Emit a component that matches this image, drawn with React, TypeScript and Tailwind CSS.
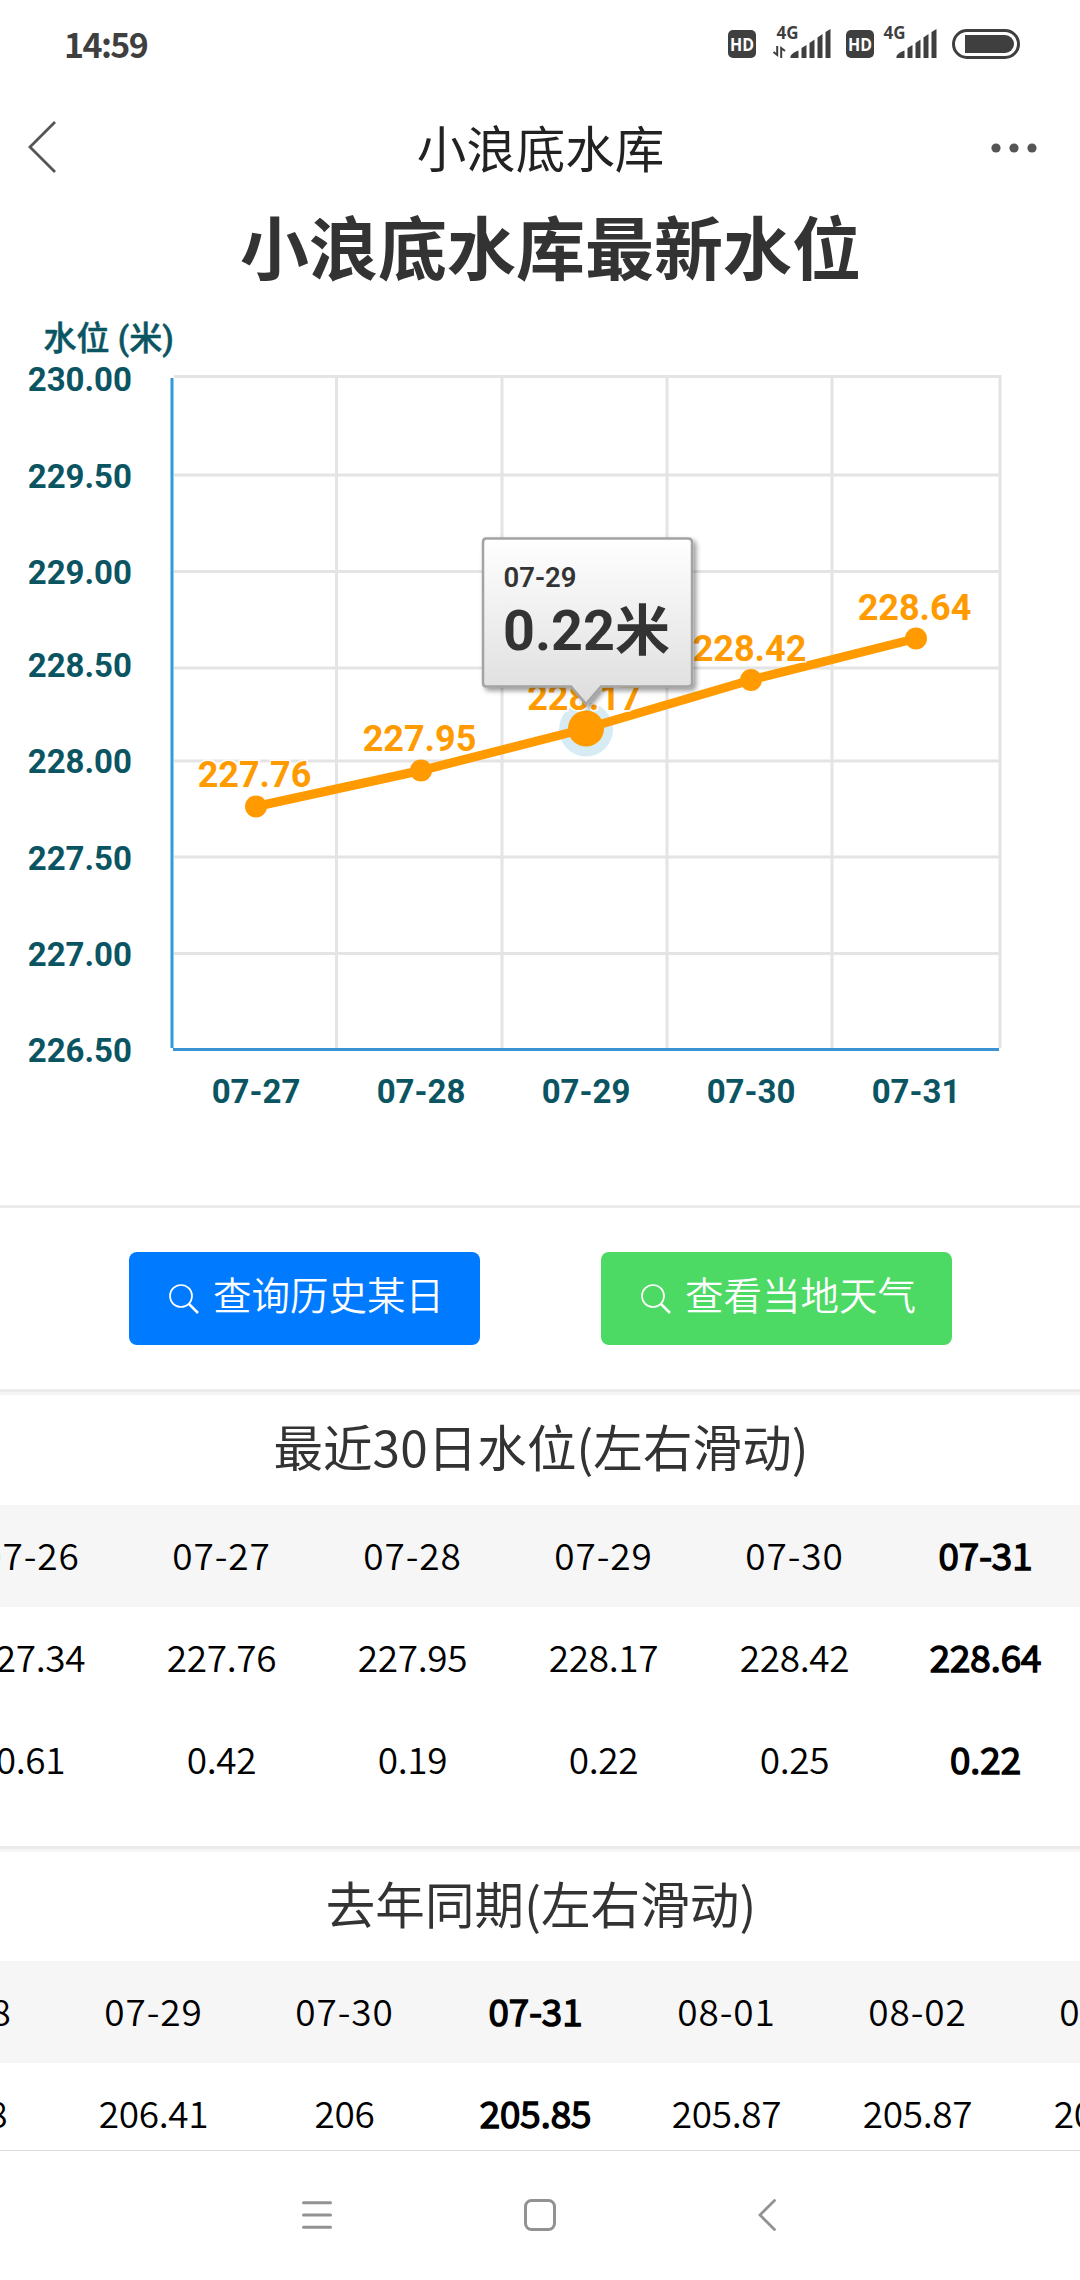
const yTicks = [
  { label: '230.00', line: 376.5, base: 391 },
  { label: '229.50', line: 475, base: 488 },
  { label: '229.00', line: 571.5, base: 584 },
  { label: '228.50', line: 668, base: 677 },
  { label: '228.00', line: 761, base: 773 },
  { label: '227.50', line: 857, base: 870 },
  { label: '227.00', line: 953.5, base: 966 },
  { label: '226.50', line: null, base: 1062 },
];

const points = [
  { date: '07-27', value: '227.76', x: 256, y: 806.5, labelX: 254.5, labelY: 787 },
  { date: '07-28', value: '227.95', x: 421, y: 770.5, labelX: 419.5, labelY: 751 },
  { date: '07-29', value: '228.17', x: 586, y: 728.5, labelX: 584, labelY: 710 },
  { date: '07-30', value: '228.42', x: 751, y: 680, labelX: 749.5, labelY: 661 },
  { date: '07-31', value: '228.64', x: 916, y: 638.5, labelX: 914.5, labelY: 620 },
];

const gridX = [336.5, 502, 667, 832, 1000];

const recent = [
  { date: '07-26', level: '227.34', diff: '0.61' },
  { date: '07-27', level: '227.76', diff: '0.42' },
  { date: '07-28', level: '227.95', diff: '0.19' },
  { date: '07-29', level: '228.17', diff: '0.22' },
  { date: '07-30', level: '228.42', diff: '0.25' },
  { date: '07-31', level: '228.64', diff: '0.22', today: true },
];

const lastYear = [
  { date: '07-28', level: '206.8' },
  { date: '07-29', level: '206.41' },
  { date: '07-30', level: '206' },
  { date: '07-31', level: '205.85', today: true },
  { date: '08-01', level: '205.87' },
  { date: '08-02', level: '205.87' },
  { date: '08-03', level: '205.87' },
];

function HdBadge() {
  return (
    <svg width="28" height="28" viewBox="0 0 28 28" className="overflow-visible">
      <rect width="28" height="28" rx="5" fill="#3f3f3f" />
      <text
        x="14"
        y="20.7"
        textAnchor="middle"
        textLength="24"
        lengthAdjust="spacingAndGlyphs"
        fill="#fff"
        className="font-['Open_Sans',sans-serif] text-[18px] font-bold"
      >
        HD
      </text>
    </svg>
  );
}

function Signal({ arrows = false }: { arrows?: boolean }) {
  return (
    <svg width="58" height="34" viewBox="0 0 58 34" fill="#3f3f3f" className="overflow-visible">
      <text
        x={arrows ? 3.5 : 4.5}
        y="14"
        textLength="22"
        lengthAdjust="spacingAndGlyphs"
        className="font-['Open_Sans',sans-serif] text-[17px] font-bold"
      >
        4G
      </text>
      {arrows && (
        <path d="M4.200 21V30L0.500 27M8.200 33V23L12 26" fill="none" stroke="#3f3f3f" strokeWidth="2" />
      )}
      <path d="M17.500 33V31Q20 27 25.500 25.500V33Z" />
      <path d="M28.500 23L33.500 20V33H28.500Z" />
      <path d="M36.500 18L41.500 14.500V33H36.500Z" />
      <path d="M44.500 12.500L49.500 9V33H44.500Z" />
      <path d="M52.500 7L57.500 4V33H52.500Z" />
    </svg>
  );
}

function StatusBar() {
  return (
    <div className="flex h-[90px] items-start justify-between pl-[64px] pr-[60px] text-[#3f3f3f]">
      <span className="mt-[23px] font-['Noto_Sans_CJK_SC',sans-serif] text-[34px] leading-[42px] font-bold tracking-[-1.6px]">
        14:59
      </span>
      <div className="flex pt-[25px]">
        <div className="mt-[5px]">
          <HdBadge />
        </div>
        <div className="ml-[17px]">
          <Signal arrows />
        </div>
        <div className="mt-[5px] ml-[15px]">
          <HdBadge />
        </div>
        <div className="ml-[5px]">
          <Signal />
        </div>
        <div className="mt-[4px] ml-[15px] flex h-[30px] w-[68px] items-center rounded-full border-3 border-[#3f3f3f] pl-[10px]">
          <div className="h-[18px] w-[49px] rounded-l-[3px] rounded-r-full bg-[#3f3f3f]" />
        </div>
      </div>
    </div>
  );
}

function NavHeader() {
  return (
    <header className="flex h-[114px] items-center justify-between pl-[28px] pr-[43px]">
      <svg width="28" height="52" viewBox="0 0 28 52" fill="none">
        <path d="M27 1L2 26L27 51" stroke="#555" strokeWidth="2.8" />
      </svg>
      <span className="-mt-[1px] ml-[34px] text-[49.500px] leading-[60px] text-[#222]">小浪底水库</span>
      <svg width="46" height="10" viewBox="0 0 46 10" fill="#555" className="mt-[2px]">
        <circle cx="5" cy="5" r="4.6" />
        <circle cx="23" cy="5" r="4.6" />
        <circle cx="41" cy="5" r="4.6" />
      </svg>
    </header>
  );
}

function LevelChart() {
  const active = points[2];

  return (
    <svg
      width="1080"
      height="905"
      viewBox="0 300 1080 905"
      className="block font-['Roboto','Noto_Sans_CJK_SC',sans-serif]"
    >
      <defs>
        <linearGradient id="tip" x1="0" y1="0" x2="0" y2="1">
          <stop offset="0" stopColor="#ffffff" />
          <stop offset="1" stopColor="#dddddd" />
        </linearGradient>
        <filter id="tipShadow" x="-10%" y="-10%" width="120%" height="125%">
          <feDropShadow dx="3" dy="3" stdDeviation="2.5" floodColor="#000" floodOpacity="0.4" />
        </filter>
      </defs>

      <text
        x="43.5"
        y="350"
        fill="#0b5563"
        stroke="#0b5563"
        strokeWidth="0.5"
        className="text-[33px] font-medium"
      >
        水位 (米)
      </text>

      {yTicks.map((tick) => (
        <g key={tick.label}>
          {tick.line && (
            <line x1="174" x2="1000" y1={tick.line} y2={tick.line} stroke="#e4e4e4" strokeWidth="3" />
          )}
          <text x="132" y={tick.base} textAnchor="end" fill="#0b5563" className="text-[33px] font-bold">
            {tick.label}
          </text>
        </g>
      ))}
      {gridX.map((x) => (
        <line key={x} x1={x} x2={x} y1="375" y2="1048" stroke="#e4e4e4" strokeWidth="3" />
      ))}
      <line x1="172" x2="172" y1="378" y2="1048" stroke="#2f9bd8" strokeWidth="3" />
      <line x1="173" x2="999" y1="1049.5" y2="1049.5" stroke="#3a93d6" strokeWidth="3" />

      {points.map((p) => (
        <text key={p.date} x={p.x} y="1103" textAnchor="middle" fill="#0b5563" className="text-[33px] font-bold">
          {p.date}
        </text>
      ))}

      <circle cx={active.x} cy={active.y + 1} r="27" fill="#d6ebf3" />
      <polyline
        points={points.map((p) => `${p.x},${p.y}`).join(' ')}
        fill="none"
        stroke="#ff9b00"
        strokeWidth="9"
      />
      {points.map((p) => (
        <circle key={p.date} cx={p.x} cy={p.y} r={p === active ? 18 : 11} fill="#ff9b00" />
      ))}
      {points.map((p) => (
        <text
          key={p.date}
          x={p.labelX}
          y={p.labelY}
          textAnchor="middle"
          fill="#ff9b00"
          stroke="#fff"
          strokeWidth="3"
          paintOrder="stroke"
          className="text-[36px] font-bold"
        >
          {p.value}
        </text>
      ))}

      {/* tooltip */}
      <path
        d="M486 538.500H688Q692 538.500 692 542.500V682.500Q692 686.500 688 686.500H601L586 704L571 686.500H486Q483 686.500 483 682.500V542.500Q483 538.500 486 538.500Z"
        fill="url(#tip)"
        stroke="#a3a3a3"
        strokeWidth="2.5"
        filter="url(#tipShadow)"
      />
      <text x="503.5" y="587" fill="#333" className="text-[27.500px] font-semibold">
        07-29
      </text>
      <text x="503" y="650" fill="#333" className="text-[56px] font-bold">
        <tspan textLength="112" lengthAdjust="spacingAndGlyphs">0.22</tspan>
        <tspan className="text-[55px]">米</tspan>
      </text>
    </svg>
  );
}

function SearchIcon() {
  return (
    <svg width="30" height="30" viewBox="0 0 30 30" fill="none" stroke="#fff" strokeWidth="1.7">
      <circle cx="12" cy="12" r="11" />
      <path d="M20 20L29 29" strokeWidth="2.5" />
    </svg>
  );
}

function ActionButton({ label, color }: { label: string; color: string }) {
  return (
    <button className={`flex h-[93px] w-[351px] items-center rounded-lg pl-[40px] text-white ${color}`}>
      <SearchIcon />
      <span className="mt-[-11px] ml-[14px] text-[38.500px] leading-[58px] font-[350] whitespace-nowrap">
        {label}
      </span>
    </button>
  );
}

function Cell({ text, today }: { text?: string; today?: boolean }) {
  return (
    <div
      className={`w-[191px] shrink-0 pl-[2px] text-center ${
        today ? 'tracking-normal [-webkit-text-stroke:1.6px_black]' : ''
      }`}
    >
      {text}
    </div>
  );
}

function SectionTitle({ children }: { children: string }) {
  return (
    <h2 className="flex h-[110px] items-center justify-center border-t-3 border-[#f5f5f5] pb-[4px] pl-[2px] text-[49.500px] tracking-[0.1px] text-[#333]">
      {children}
    </h2>
  );
}

export default function App() {
  return (
    <div className="flex h-[2280px] w-[1080px] flex-col overflow-hidden bg-white font-['Noto_Sans_CJK_SC',sans-serif]">
      <StatusBar />
      <NavHeader />
      <h1 className="flex h-[96px] items-center justify-center pl-[21px] pb-[15px] text-[69px] leading-[80px] font-bold text-[#333]">
        小浪底水库最新水位
      </h1>
      <LevelChart />

      <div className="flex h-[187px] items-start gap-[121px] border-y-3 border-[#ebebeb] pt-[44px] pl-[129px]">
        <ActionButton label="查询历史某日" color="bg-[#007aff]" />
        <ActionButton label="查看当地天气" color="bg-[#4cd964]" />
      </div>

      <section className="h-[457px] shrink-0 border-b-3 border-[#ebebeb]">
        <SectionTitle>最近30日水位(左右滑动)</SectionTitle>
        <div className="mt-[3px] text-[37px] leading-[99px] font-[350] tracking-[-0.3px] text-black">
          <div className="flex h-[102px] justify-end bg-[#f6f6f6] tracking-[0.9px]">
            {recent.map((d) => (
              <Cell key={d.date} text={d.date} today={d.today} />
            ))}
          </div>
          <div className="flex h-[102px] justify-end">
            {recent.map((d) => (
              <Cell key={d.date} text={d.level} today={d.today} />
            ))}
          </div>
          <div className="flex h-[102px] justify-end">
            {recent.map((d) => (
              <Cell key={d.date} text={d.diff} today={d.today} />
            ))}
          </div>
        </div>
      </section>

      <section className="h-[301px] shrink-0 overflow-hidden">
        <SectionTitle>去年同期(左右滑动)</SectionTitle>
        <div className="mt-[2px] text-[37px] leading-[99px] font-[350] tracking-[-0.3px] text-black">
          <div className="h-[102px] bg-[#f6f6f6] tracking-[0.9px]">
            <div className="-ml-[134px] flex">
              {lastYear.map((d) => (
                <Cell key={d.date} text={d.date} today={d.today} />
              ))}
            </div>
          </div>
          <div className="-ml-[134px] flex">
            {lastYear.map((d) => (
              <Cell key={d.date} text={d.level} today={d.today} />
            ))}
          </div>
        </div>
      </section>

      <nav className="flex h-[130px] items-center border-t border-[#dcdcdc] pb-[2px] pl-[302px]">
        <svg width="30" height="28" viewBox="0 0 30 28" stroke="#929292" strokeWidth="3" strokeLinecap="round">
          <path d="M1.500 1.800H28.500M1.500 14H28.500M1.500 26.200H28.500" />
        </svg>
        <svg className="ml-[192px]" width="32" height="32" viewBox="0 0 32 32" fill="none">
          <rect x="1.5" y="1.5" width="29" height="29" rx="6" stroke="#929292" strokeWidth="3" />
        </svg>
        <svg className="ml-[202px]" width="18" height="32" viewBox="0 0 18 32" fill="none">
          <path d="M16.500 1.500L2 16L16.500 30.500" stroke="#929292" strokeWidth="2.8" strokeLinecap="round" />
        </svg>
      </nav>
    </div>
  );
}
